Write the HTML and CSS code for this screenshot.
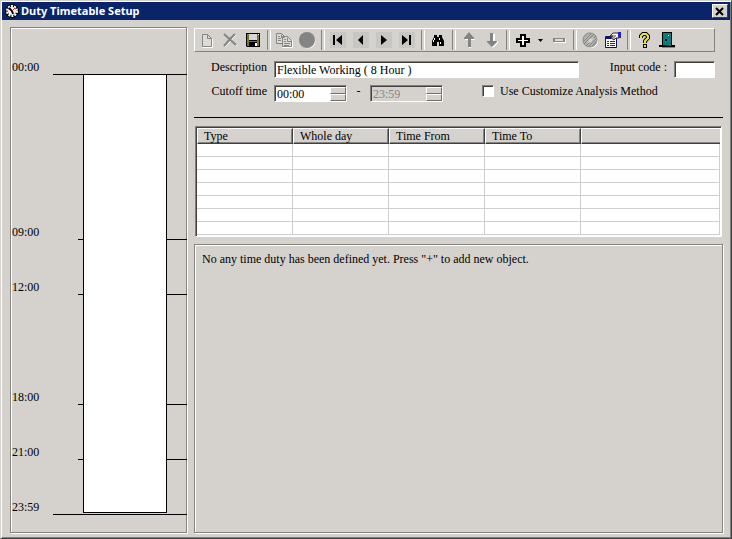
FILE: index.html
```html
<!DOCTYPE html>
<html lang="en">
<head>
<meta charset="utf-8">
<title>Duty Timetable Setup</title>
<link rel="stylesheet" href="styles.css">
</head>
<body>
<div class="window">
  <header class="titlebar">
    <svg class="title-icon" width="16" height="16" viewBox="0 0 16 16" aria-hidden="true">
      <circle cx="8" cy="8" r="7" fill="#000"/>
      <circle cx="8" cy="8" r="4" fill="#fff"/>
      <circle cx="8" cy="8" r="5" fill="none" stroke="#fff" stroke-width="2" stroke-dasharray="2 1.140"/>
      <path d="M5 5l3 3M8 8l1 3" stroke="#000" stroke-width="2"/>
      <path d="M8 8l3-3" stroke="#c22" stroke-width="1"/>
    </svg>
    <h1>Duty Timetable Setup</h1>
    <button class="close" type="button" aria-label="Close">
      <svg width="10" height="9" viewBox="0 0 10 9"><path d="M1 1l7 7M8 1l-7 7" stroke="#000" stroke-width="2"/></svg>
    </button>
  </header>
  <main class="content">
    <section class="timeline" aria-label="Day scale">
      <div class="bar"></div>
      <span class="hour r1">00:00</span><i class="line r1"></i>
      <span class="hour r2">09:00</span><i class="tick r2"></i><i class="side r2"></i>
      <span class="hour r3">12:00</span><i class="tick r3"></i><i class="side r3"></i>
      <span class="hour r4">18:00</span><i class="tick r4"></i><i class="side r4"></i>
      <span class="hour r5">21:00</span><i class="tick r5"></i><i class="side r5"></i>
      <span class="hour r6">23:59</span><i class="line r6"></i>
    </section>
    <div class="editor">
      <div class="toolbar" role="toolbar" aria-label="Timetable actions">
        <button type="button" aria-label="New"><svg width="18" height="18" viewBox="0 0 18 18"><path d="M4.500 3.500h5l4 4v8h-9z" fill="#dedbd6" stroke="#858585"/><path d="M9.500 3.500v4h4" fill="none" stroke="#858585"/><path d="M14.500 8v8.500h-10" fill="none" stroke="#fff"/></svg></button>
        <button type="button" aria-label="Delete"><svg width="18" height="18" viewBox="0 0 18 18"><path d="M4 4l12 11M15 4l-11 12" stroke="#fff" stroke-width="1"/><path d="M3 3l12 11M14 3l-5 5-6 7" fill="none" stroke="#858585" stroke-width="2"/></svg></button>
        <button type="button" aria-label="Save"><svg width="18" height="18" viewBox="0 0 18 18"><path d="M2 2h14v14H3l-1-1z" fill="#000"/><path d="M3 3h2v7h8V3h2v12h-2v-4H5v4H3z" fill="#77762a"/><path d="M5 3h8v6H5z" fill="#d9d6d1"/><path d="M11 12h2v3h-2z" fill="#fff"/><path d="M14 3h1v1h-1z" fill="#fff"/></svg></button>
        <i class="sep"></i>
        <button type="button" aria-label="Copy"><svg width="18" height="18" viewBox="0 0 18 18"><g fill="#dedbd6" stroke="#858585"><path d="M1.500 2.500h5l3 3v7h-8z"/><path d="M7.500 5.500h5l4 4v6h-9z"/></g><path d="M6.500 3v3h3M12.500 6v4h4M3 5h2M3 7h3M3 9h3M9 8h2M9 10h2M9 12h6M9 14h5" transform="translate(0 .5)" fill="none" stroke="#858585"/><path d="M17.500 9v7.500h-10" fill="none" stroke="#fff"/></svg></button>
        <button type="button" aria-label="Stop"><svg width="18" height="18" viewBox="0 0 18 18"><circle cx="10" cy="10" r="7.500" fill="#fff"/><circle cx="9" cy="9" r="8" fill="#848484"/></svg></button>
        <i class="sep"></i>
        <button type="button" aria-label="First"><svg width="18" height="18" viewBox="0 0 18 18"><path fill="#c8c7c3" d="M1 1h16v16H1z"/><path d="M4 4h2v10H4zM13 4v10L7 9z"/></svg></button>
        <button type="button" aria-label="Previous"><svg width="18" height="18" viewBox="0 0 18 18"><path fill="#c8c7c3" d="M1 1h16v16H1z"/><path d="M11 4v10L6 9z"/></svg></button>
        <button type="button" aria-label="Next"><svg width="18" height="18" viewBox="0 0 18 18"><path fill="#c8c7c3" d="M1 1h16v16H1z"/><path d="M6 4v10l6-5z"/></svg></button>
        <button type="button" aria-label="Last"><svg width="18" height="18" viewBox="0 0 18 18"><path fill="#c8c7c3" d="M1 1h16v16H1z"/><path d="M4 4v10l6-5zM11 4h2v10h-2z"/></svg></button>
        <i class="sep"></i>
        <button type="button" aria-label="Find"><svg width="18" height="18" viewBox="0 0 18 18"><path d="M5 4h3v2h2V4h3v2l2 4v5h-5v-4H8v4H3v-5l2-4z"/><path d="M5 7h1v2H5v2H4v-2h1zM10 7h1v2h-1zM11 11h1v2h-1z" fill="#fff"/></svg></button>
        <i class="sep"></i>
        <button type="button" aria-label="Move up"><svg width="18" height="18" viewBox="0 0 18 18"><path d="M10 3l5 6h-4v8H9V9H5z" fill="#fff"/><path d="M9 1l5 6v1h-3v8H8V8H4V7z" fill="#848484"/></svg></button>
        <button type="button" aria-label="Move down"><svg width="18" height="18" viewBox="0 0 18 18"><path d="M9 3h3v7h3v2l-5 5-1-1z" fill="#fff"/><path d="M7 2h3v8h4v1l-5 5-5-5v-1h3z" fill="#848484"/></svg></button>
        <i class="sep"></i>
        <button type="button" aria-label="Add"><svg width="18" height="18" viewBox="0 0 18 18"><path d="M6 3h6v4h4v5h-4v4H6v-4H2V7h4z"/><path d="M8 5h2v4h4v1h-4v4H8v-4H4V9h4z" fill="#fff"/></svg></button>
        <button class="drop" type="button" aria-label="Add options"><svg width="5" height="3" viewBox="0 0 5 3"><path d="M0 0h5L2.500 3z"/></svg></button>
        <button type="button" aria-label="Remove"><svg width="18" height="18" viewBox="0 0 18 18"><path d="M4 8h12v4H4z" fill="#fff"/><path d="M3 7h12v4H3z" fill="#858585"/><path d="M5 8h8v2H5z" fill="#dedbd6"/></svg></button>
        <i class="sep"></i>
        <button type="button" aria-label="Disable"><svg width="18" height="18" viewBox="0 0 18 18"><circle cx="10" cy="10" r="7" fill="#fff"/><circle cx="9" cy="9" r="7" fill="#b4b2af" stroke="#858585"/><path d="M3 10l7-7M3 13L13 3M5 15L15 5M8 15l7-7M11 15l4-4" stroke="#858585"/><path d="M8 8l5-1-3 4-3 1z" fill="#d8d6d2"/></svg></button>
        <button type="button" aria-label="Properties"><svg width="18" height="18" viewBox="0 0 18 18"><path d="M1.500 5.500h11v11h-11z" fill="#fff" stroke="#101060"/><path d="M2 6h10v2H2z" fill="#101080"/><path d="M3 10.500h2M6 10.500h5M3 12.500h2M6 12.500h5M3 14.500h2M6 14.500h5" stroke="#2020a0"/><path d="M6 5l3-3h5l1 2v3h-3l-2 2-3-2 2-2z" fill="#f4f1df" stroke="#333"/><path d="M7 5h5M8 7h3" stroke="#555"/><path d="M14 1h3v6h-3z" fill="#2222bd"/></svg></button>
        <i class="sep"></i>
        <button type="button" aria-label="Help"><svg width="18" height="18" viewBox="0 0 18 18"><path d="M6 7V5l2-2h3l2 2v2l-3 3v2" fill="none" stroke="#000" stroke-width="4"/><path d="M8 13h4v4H8z"/><path d="M6 7V5l2-2h3l2 2v2l-3 3v2" fill="none" stroke="#f1e72a" stroke-width="2"/><path d="M9 14h2v2H9z" fill="#f1e72a"/></svg></button>
        <button type="button" aria-label="Exit"><svg width="18" height="18" viewBox="0 0 18 18"><path d="M4 16h13v1H4z" fill="#888"/><path d="M4 1h10v13h3v2H1v-2h3z"/><path d="M5 2h8v13l-8-1z" fill="#087d7d"/><path d="M7 8h2v2H7z" fill="#000"/><path d="M10 4h1v1h-1z" fill="#fff"/></svg></button>
      </div>
      <form class="form">
        <div class="row">
          <label class="name" for="description">Description</label>
          <span class="field grow"><input id="description" type="text" value="Flexible Working ( 8 Hour )" autofocus></span>
          <label class="code-label" for="code">Input code :</label>
          <span class="field code"><input id="code" type="text"></span>
        </div>
        <div class="row">
          <label class="name" for="from">Cutoff time</label>
          <span class="field time"><input id="from" type="text" value="00:00">
            <span class="spin"><button type="button" aria-label="Increase start"></button><button type="button" aria-label="Decrease start"></button></span></span>
          <span class="dash">-</span>
          <span class="field time"><input type="text" value="23:59" aria-label="Cutoff end" disabled>
            <span class="spin"><button type="button" aria-label="Increase end" disabled></button><button type="button" aria-label="Decrease end" disabled></button></span></span>
          <label class="check"><input type="checkbox">Use Customize Analysis Method</label>
        </div>
      </form>
      <div class="list">
        <table>
          <colgroup><col class="c"><col class="c"><col class="c"><col class="c"><col></colgroup>
          <thead><tr><th>Type</th><th>Whole day</th><th>Time From</th><th>Time To</th><th></th></tr></thead>
          <tbody>
            <tr><td></td><td></td><td></td><td></td><td></td></tr>
            <tr><td></td><td></td><td></td><td></td><td></td></tr>
            <tr><td></td><td></td><td></td><td></td><td></td></tr>
            <tr><td></td><td></td><td></td><td></td><td></td></tr>
            <tr><td></td><td></td><td></td><td></td><td></td></tr>
            <tr><td></td><td></td><td></td><td></td><td></td></tr>
            <tr><td></td><td></td><td></td><td></td><td></td></tr>
          </tbody>
        </table>
      </div>
      <section class="detail"><p>No any time duty has been defined yet. Press "+" to add new object.</p></section>
    </div>
  </main>
</div>
</body>
</html>
```
FILE: styles.css
```css
* { box-sizing: border-box; }

body {
  margin: 0;
  background: #d5d2cd;
  color: #000;
  font: 12px/14px "Liberation Serif", serif;
}

button, input { font: inherit; color: inherit; margin: 0; padding: 0; border: 0; border-radius: 0; }
button { background: #d5d2cd; }

.window {
  display: flex;
  flex-direction: column;
  min-height: 100vh;
  padding: 1px;
  border: 1px solid;
  border-color: #d5d2cd #404040 #404040 #d5d2cd;
  box-shadow: inset 1px 1px #fff, inset -1px -1px #808080;
}

.titlebar {
  display: flex;
  align-items: center;
  gap: 1px;
  height: 18px;
  padding: 0 2px;
  background: #0a246a;
  color: #fff;
}
.titlebar h1 {
  flex: 1;
  margin: 0;
  font: bold 11px/16px "Noto Sans", sans-serif;
}
.close {
  display: grid;
  place-items: center;
  width: 16px;
  height: 14px;
  border: 1px solid;
  border-color: #fff #404040 #404040 #fff;
}

.content {
  flex: 1;
  display: flex;
  gap: 6px;
  padding: 7px 7px 4px 8px;
}

.timeline, .detail {
  border: 1px solid #85827e;
  box-shadow: inset 1px 1px #fff, 1px 1px #fff;
}

.timeline {
  display: grid;
  grid-template-columns: 42px 25px 5px 84px 20px;
  grid-template-rows: 47px 9fr 3fr 6fr 3fr 3fr;
  width: 177px;
  padding-bottom: 17px;
}
.bar {
  grid-area: 2 / 4 / 7 / 5;
  margin-bottom: 2px;
  border: 1px solid #000;
  border-top: 0;
  background: #fff;
}
.hour { grid-column: 1; align-self: end; padding: 0 0 1px 1px; }
.line, .tick, .side { border-bottom: 1px solid #000; }
.line { grid-column: 2 / 6; align-self: end; }
.tick { grid-column: 3; align-self: end; }
.side { grid-column: 5; align-self: end; }
.r1 { grid-row: 1; }
.r2 { grid-row: 2; }
.r3 { grid-row: 3; }
.r4 { grid-row: 4; }
.r5 { grid-row: 5; }
.r6 { grid-row: 6; }

.editor {
  flex: 1;
  display: flex;
  flex-direction: column;
  min-width: 0;
  margin-left: 1px;
}

.toolbar {
  display: flex;
  align-items: center;
  height: 24px;
  margin: 1px 8px 0 0;
  border: 1px solid;
  border-color: #fff #85827e #85827e #fff;
}
.toolbar button {
  display: grid;
  place-items: center;
  width: 23px;
  height: 22px;
}
.toolbar .drop { width: 13px; }
.sep { width: 8px; height: 20px; }
.sep::before {
  content: "";
  display: block;
  width: 2px;
  height: 20px;
  margin: 0 3px;
  border-left: 1px solid #85827e;
  border-right: 1px solid #fff;
}

.form {
  display: flex;
  flex-direction: column;
  gap: 7px;
  padding: 9px 8px 15px 0;
  border-bottom: 1px solid #000;
}
.row { display: flex; line-height: 12px; }
.name { width: 73px; text-align: right; margin-right: 7px; }
.field {
  display: flex;
  height: 17px;
  border: 1px solid;
  border-color: #808080 #fff #fff #808080;
  box-shadow: inset 1px 1px #404040;
  background: #fff;
}
.field input {
  flex: 1;
  min-width: 0;
  padding: 1px 0 0 2px;
  background: transparent;
  outline: 0;
}
.field input:disabled { color: #858585; }
.field:has(input:disabled) { background: #d5d2cd; }
.grow { flex: 1; }
.code { width: 41px; }
.code-label { width: 88px; text-align: right; margin-right: 7px; }
.time { width: 73px; }
.spin {
  display: grid;
  width: 16px;
  margin-top: 1px;
}
.spin button {
  height: 7px;
  border: 1px solid;
  border-color: #fff #707070 #707070 #fff;
}
.dash { width: 23px; text-align: center; }
.check { display: flex; gap: 6px; margin-left: 39px; }
.check input {
  appearance: none;
  width: 12px;
  height: 12px;
  background: #fff;
  border: 1px solid;
  border-color: #808080 #fff #fff #808080;
  box-shadow: inset 1px 1px #404040;
}

.list {
  margin: 8px 1px 7px;
  padding: 1px;
  border: 1px solid;
  border-color: #808080 #fff #fff #808080;
  box-shadow: inset 1px 1px #404040;
  background: #fff;
}
table {
  width: 100%;
  table-layout: fixed;
  border-collapse: separate;
  border-spacing: 0;
}
.c { width: 96px; }
th {
  height: 16px;
  padding: 0 0 0 6px;
  background: #d5d2cd;
  border: 1px solid;
  border-color: #fff #404040 #404040 #fff;
  box-shadow: inset -1px -1px #858585;
  font-weight: normal;
  line-height: 14px;
  text-align: left;
}
th:last-child { border-right: 0; box-shadow: inset 0 -1px #858585; }
td {
  height: 13px;
  padding: 0;
  border-right: 1px solid #cfcfcf;
  border-bottom: 1px solid #cfcfcf;
}

.detail { flex: 1; }
.detail p { margin: 7px; }
```
